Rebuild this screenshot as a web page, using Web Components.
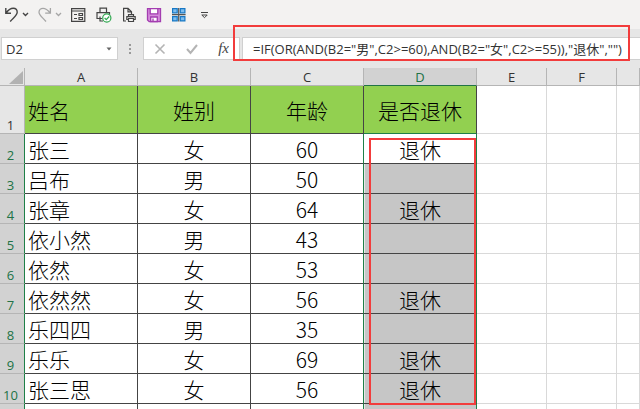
<!DOCTYPE html>
<html lang="zh-CN">
<head>
<meta charset="utf-8">
<title>是否退休</title>
<style>
  body {
    margin: 0;
    background: #fff;
    font-family: "Open Sans", "Noto Sans CJK SC", sans-serif;
  }
</style>
</head>
<body>
<sheet-app>
  <quick-bar slot="tools"></quick-bar>
  <formula-bar slot="formula" cell="D2" formula='=IF(OR(AND(B2="男",C2&gt;=60),AND(B2="女",C2&gt;=55)),"退休","")'></formula-bar>
  <sheet-grid></sheet-grid>
</sheet-app>

<script>
class SheetApp extends HTMLElement {
  constructor() {
    super();
    const template = document.createElement('template');
    template.innerHTML = `
      <style>
        :host {
          display: flex;
          flex-direction: column;
          height: 100vh;
          overflow: hidden;
          background: #e6e6e6;
        }
      </style>
      <slot name="tools"></slot>
      <slot name="formula"></slot>
      <slot></slot>
    `;
    this.attachShadow({mode: 'open'});
    this.shadowRoot.appendChild(template.content.cloneNode(true));
  }
}

class QuickBar extends HTMLElement {
  constructor() {
    super();
    const template = document.createElement('template');
    template.innerHTML = `
      <style>
        :host {
          display: flex;
          align-items: center;
          gap: 9px;
          height: 29px;
          padding-left: 5px;
          background: #f3f2f1;
        }
        .pair { display: flex; }
        button {
          display: block;
          padding: 0;
          border: 0;
          background: none;
          color: #444;
        }
        button:disabled { color: #a6a6a6; }
        .save { color: #a33db0; }
        .tiles { color: #1878c4; }
        svg {
          display: block;
          fill: none;
          stroke: currentColor;
        }
      </style>
      <div class="pair">
        <button aria-label="撤消"><svg width="16" height="16" viewBox="0 0 16 16" stroke-width="1.4"><path d="M.8 1v5.2H6M1 6C3.2 3.2 5.4 1.3 8.2 1.3c2.4 0 4 1.8 4 4 0 3.2-4.2 5.6-7 9.2"/></svg></button>
        <button aria-label="撤消列表"><svg width="8" height="16" viewBox="0 0 8 16" stroke-width="1.4"><path d="M2 6l2.500 2.500L7 6"/></svg></button>
      </div>
      <div class="pair">
        <button aria-label="恢复" disabled><svg width="16" height="16" viewBox="0 0 16 16" stroke-width="1.3"><path d="M12.400 1v5.200H7.200M12.300 6C10 3.200 7.800 1.300 5 1.300c-2.400 0-4 1.800-4 4 0 3.200 4.200 5.600 7 9.200"/></svg></button>
        <button aria-label="恢复列表" disabled><svg width="8" height="16" viewBox="0 0 8 16" stroke-width="1.3"><path d="M2 6l2.500 2.500L7 6"/></svg></button>
      </div>
      <button aria-label="窗体"><svg width="16" height="16" viewBox="0 0 16 16" stroke-width="1.2"><path d="M.6 1.600h13.200v12.800H.6zM.6 4h13.200M3 7.500h3M3 11.500h3"/><path d="M8 6.500h3.500v2H8zM8 10.500h3.500v2H8z"/></svg></button>
      <button aria-label="快速打印"><svg width="16" height="16" viewBox="0 0 16 16" stroke-width="1.2"><path d="M4 5.500V1.200h6.500v4.300M6 11.500H1V5.600h12.500v3M4 9.500V14h3"/><circle cx="10.800" cy="11" r="4.100" fill="#fff" stroke="#2fa84f"/><path d="M8.600 11l1.700 1.700 2.900-3.200" stroke="#2fa84f"/></svg></button>
      <button aria-label="打印预览"><svg width="16" height="16" viewBox="0 0 16 16" stroke-width="1.2"><path d="M5 14H2.600V1.300H7l3.500 3.500V7M7 1.300v3.600h3.500"/><path d="M7.500 9.500V7.700h5v1.800M7 12.500H5.800V9.600h8.400v2.900H13"/><path d="M7.500 11.500h5v3h-5z"/></svg></button>
      <button class="save" aria-label="保存"><svg width="16" height="16" viewBox="0 0 16 16" stroke-width="1.3"><path d="M1.500 1.600h13v13H3.200l-1.700-1.700z" fill="#d58bdc"/><path d="M4.200 1.600h7.600v5.200H4.200z" fill="#fff"/><path d="M4.700 14.500V10h6.600v4.500z" fill="#fff"/><path d="M7 11.500v3"/></svg></button>
      <button class="tiles" aria-label="单元格样式"><svg width="16" height="16" viewBox="0 0 16 16" stroke-width="1.2"><path d="M1.600 1.600h4.600v4.200H1.600zM9.300 1.600h4.600v4.200H9.300zM1.600 9.700h4.600v4.200H1.600zM9.300 9.700h4.600v4.200H9.300z" fill="#7dbdf0"/><path d="M1 7.700h13.600M7.700 1v13.600" stroke="#555"/></svg></button>
      <button aria-label="自定义快速访问工具栏"><svg width="16" height="16" viewBox="0 0 16 16"><path d="M5 5.500h7"/><path d="M5.800 8h5.400L8.500 10.700z"/></svg></button>
    `;
    this.attachShadow({mode: 'open'});
    this.shadowRoot.appendChild(template.content.cloneNode(true));
  }
}

class FormulaBar extends HTMLElement {
  constructor() {
    super();
    const template = document.createElement('template');
    template.innerHTML = `
      <style>
        :host {
          display: flex;
          padding: 8px 0 8px 1px;
        }
        .box {
          display: flex;
          align-items: center;
          box-sizing: border-box;
          height: 23px;
          border: 1px solid #d0d0d0;
          background: #fff;
        }
        input {
          flex: 1;
          min-width: 0;
          padding: 0;
          border: 0;
          outline: 0;
          background: none;
          color: #333;
          font: 13px "Open Sans", "Noto Sans CJK SC", sans-serif;
        }
        button {
          padding: 0;
          border: 0;
          background: none;
          color: #b4b4b4;
        }
        svg {
          display: block;
          fill: none;
          stroke: currentColor;
        }
        .name { width: 117px; padding: 0 4px; }
        .name button { color: #666; }
        .grip { align-self: center; margin: 0 9px 0 8px; color: #999; }
        .actions { width: 97px; justify-content: space-between; padding: 0 10px; }
        .fx {
          color: #444;
          font: italic 15px "Liberation Serif", serif;
        }
        .formula {
          position: relative;
          flex: 1;
          margin-left: 2px;
          padding-left: 10px;
          border-right: 0;
        }
        .mark {
          position: absolute;
          inset: -13px 10px -2px -10px;
          border: 2px solid #f23c3c;
          pointer-events: none;
        }
      </style>
      <div class="box name">
        <input class="cell" aria-label="名称框">
        <button aria-label="名称列表"><svg width="8" height="8" viewBox="0 0 8 8"><path d="M1.500 2.500h5L4 5.500z" fill="currentColor" stroke="none"/></svg></button>
      </div>
      <svg class="grip" width="8" height="12" viewBox="0 0 8 12"><path d="M4 1v10" stroke-width="2" stroke-dasharray="2 2"/></svg>
      <div class="box actions">
        <button aria-label="取消"><svg width="14" height="12" viewBox="0 0 14 12" stroke-width="1.6"><path d="M1.500 1.500l9 9M10.500 1.500l-9 9"/></svg></button>
        <button aria-label="输入"><svg width="14" height="12" viewBox="0 0 14 12" stroke-width="2"><path d="M1 6l3.500 4L11 2"/></svg></button>
        <button class="fx" aria-label="插入函数">fx</button>
      </div>
      <div class="box formula">
        <input class="text" aria-label="编辑栏">
        <div class="mark"></div>
      </div>
    `;
    this.attachShadow({mode: 'open'});
    this.shadowRoot.appendChild(template.content.cloneNode(true));
    this.shadowRoot.querySelector('.cell').value = this.getAttribute('cell');
    this.shadowRoot.querySelector('.text').value = this.getAttribute('formula');
  }
}

const people = [
  ['张三', '女', 60, '退休'],
  ['吕布', '男', 50, ''],
  ['张章', '女', 64, '退休'],
  ['依小然', '男', 43, ''],
  ['依然', '女', 53, ''],
  ['依然然', '女', 56, '退休'],
  ['乐四四', '男', 35, ''],
  ['乐乐', '女', 69, '退休'],
  ['张三思', '女', 56, '退休'],
];

class SheetGrid extends HTMLElement {
  constructor() {
    super();
    const row = (cells, n) => `
      <tr>
        <th scope="row">${n}</th>
        ${cells.map(c => `<td>${c}</td>`).join('')}
        <td></td><td></td><td></td>
      </tr>`;

    const template = document.createElement('template');
    template.innerHTML = `
      <style>
        :host {
          display: block;
          position: relative;
          flex: 1;
          min-height: 0;
          overflow: hidden;
        }
        table {
          width: 100%;
          table-layout: fixed;
          border-spacing: 0;
        }
        .num { width: 25px; }
        .wide { width: 113px; }
        .slim { width: 70px; }
        th, td {
          box-sizing: border-box;
          padding: 0;
          border: solid #d9d9d9;
          border-width: 0 1px 1px 0;
          white-space: nowrap;
        }
        th {
          color: #333;
          font-size: 13px;
          font-weight: 400;
          line-height: 15px;
        }
        thead th {
          height: 18px;
          padding-top: 2px;
          border-color: #b5b5b5;
        }
        thead th:nth-child(5) {
          background: #d2d2d2;
          border-bottom-color: #217346;
          color: #217346;
        }
        .corner svg { display: block; margin: 0 1px 0 auto; }
        tbody th {
          vertical-align: bottom;
          border-color: #b5b5b5;
          padding-right: 3px;
        }
        tbody td {
          height: 30px;
          background: #fff;
          color: #000;
          font: 300 21px/26px "Noto Sans CJK SC", sans-serif;
          text-align: center;
        }
        tbody td:nth-child(2) { padding-left: 3px; text-align: left; }
        tbody td:nth-child(-n+5) { border-color: #444; }
        tbody tr:first-child td { height: 48px; }
        tbody tr:first-child td:nth-child(-n+5) { background: #92d050; }
        tbody tr:first-child td:nth-child(5) { border-bottom-color: #1f8048; }

        /* rows touched by the selection */
        tbody tr:not(:first-child) th {
          background: #d2d2d2;
          border-right-color: #1f8048;
          color: #217346;
        }
        tbody tr:not(:first-child) td:nth-child(4),
        tbody tr:not(:first-child) td:nth-child(5) { border-right-color: #1f8048; }
        tbody tr:nth-child(n+3) td:nth-child(5) {
          background: #c6c6c6;
          box-shadow: inset 1px 0 #e8e8e8;
        }

        .mark {
          position: absolute;
          left: 369px;
          top: 70px;
          width: 107px;
          height: 267px;
          box-sizing: border-box;
          border: 2px solid #f23c3c;
          pointer-events: none;
        }
      </style>
      <table>
        <colgroup>
          <col class="num"><col class="wide" span="4"><col class="slim" span="2"><col>
        </colgroup>
        <thead>
          <tr>
            <th class="corner"><svg width="14" height="13" viewBox="0 0 14 13"><path d="M14 0v13H0z" fill="#b2b2b2"/></svg></th>
            ${['A', 'B', 'C', 'D', 'E', 'F', ''].map(c => `<th scope="col">${c}</th>`).join('')}
          </tr>
        </thead>
        <tbody>
          ${row(['姓名', '姓别', '年龄', '是否退休'], 1)}
          ${people.map((p, i) => row(p, i + 2)).join('')}
          ${row(['', '', '', ''], '')}
        </tbody>
      </table>
      <div class="mark"></div>
    `;
    this.attachShadow({mode: 'open'});
    this.shadowRoot.appendChild(template.content.cloneNode(true));
  }
}

customElements.define('sheet-app', SheetApp);
customElements.define('quick-bar', QuickBar);
customElements.define('formula-bar', FormulaBar);
customElements.define('sheet-grid', SheetGrid);
</script>
</body>
</html>
